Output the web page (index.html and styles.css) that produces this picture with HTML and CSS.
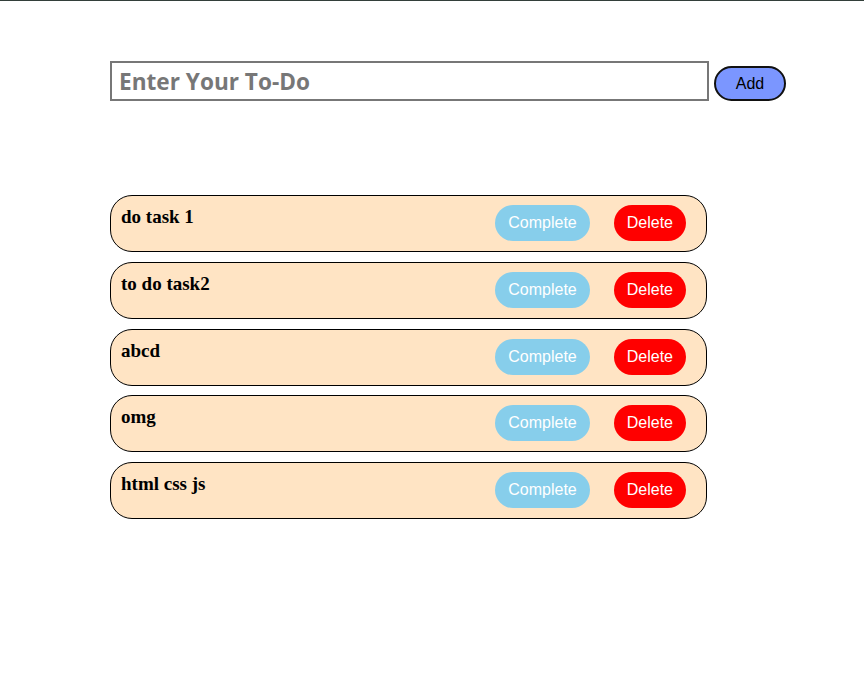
FILE: index.html
```html
<!DOCTYPE html>
<html>
<head>
<meta charset="utf-8">
<link rel="stylesheet" href="styles.css">
</head>
<body>
<div class="topbar"></div>
<main class="app">
  <div class="entry">
    <input class="todo-input" type="text" placeholder="Enter Your To-Do">
    <button class="add-btn">Add</button>
  </div>
  <ul class="list">
    <li class="task"><span class="task-text">do task 1</span><div class="actions"><button class="btn complete">Complete</button><button class="btn delete">Delete</button></div></li>
    <li class="task"><span class="task-text">to do task2</span><div class="actions"><button class="btn complete">Complete</button><button class="btn delete">Delete</button></div></li>
    <li class="task"><span class="task-text">abcd</span><div class="actions"><button class="btn complete">Complete</button><button class="btn delete">Delete</button></div></li>
    <li class="task"><span class="task-text">omg</span><div class="actions"><button class="btn complete">Complete</button><button class="btn delete">Delete</button></div></li>
    <li class="task"><span class="task-text">html css js</span><div class="actions"><button class="btn complete">Complete</button><button class="btn delete">Delete</button></div></li>
  </ul>
</main>
</body>
</html>
```
FILE: styles.css
```css
html, body {
  margin: 0;
  padding: 0;
  background: #ffffff;
}
.topbar {
  height: 1px;
  background: #333f3a;
}
.app {
  padding: 60px 0 0 110px;
  font-family: "Liberation Sans", Arial, sans-serif;
}
.entry {
  display: flex;
  align-items: flex-start;
  gap: 5px;
}
.todo-input {
  box-sizing: border-box;
  width: 599px;
  height: 40px;
  border: 2px solid #777777;
  padding: 0 7px;
  font-family: "Open Sans", sans-serif;
  font-weight: 700;
  font-size: 22.6px;
  color: #777;
  outline: none;
}
.todo-input::placeholder {
  color: #777777;
  opacity: 1;
}
.add-btn {
  box-sizing: border-box;
  margin-top: 5px;
  width: 72px;
  height: 35px;
  border: 2px solid #111;
  border-radius: 18px;
  background: #7b96ff;
  color: #000;
  font-family: "Liberation Sans", Arial, sans-serif;
  font-size: 16px;
  padding: 0;
}
.list {
  list-style: none;
  margin: 94px 0 0;
  padding: 0;
  display: flex;
  flex-direction: column;
  gap: 9.75px;
  width: 597px;
}
.task {
  box-sizing: border-box;
  height: 57px;
  border: 1px solid #000;
  border-radius: 22px;
  background: #ffe4c4;
  display: flex;
  justify-content: space-between;
  align-items: flex-start;
  padding: 9px 20px 0 10px;
}
.task-text {
  font-family: "Liberation Serif", "Times New Roman", serif;
  font-weight: 700;
  font-size: 19px;
  line-height: 24px;
  color: #000;
}
.actions {
  display: flex;
  gap: 24px;
}
.btn {
  height: 36px;
  border: none;
  border-radius: 18px;
  color: #fff;
  font-family: "Liberation Sans", Arial, sans-serif;
  font-size: 16px;
  padding: 0 13px;
}
.complete { background: #87ceeb; }
.delete { background: #ff0000; }
```
